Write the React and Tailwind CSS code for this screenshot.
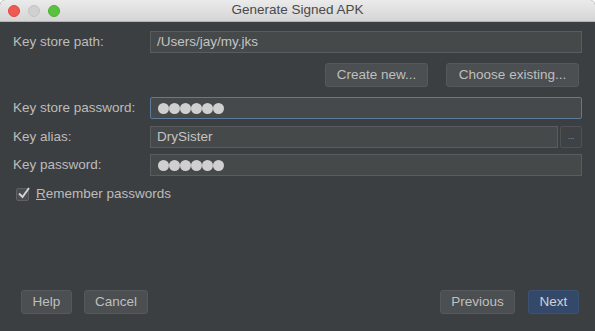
const Dots = () => (
  <div className="flex items-center pl-[7px]">
    {[0, 1, 2, 3, 4, 5].map((i) => (
      <span key={i} className="block w-[11px] h-[11px] rounded-full bg-[#cfcfcf]" />
    ))}
  </div>
);

const Field = ({ children, focused, className = "" }) => (
  <div
    className={`h-[22px] flex items-center border bg-[#45494a] ${
      focused ? "border-[#5b7a9c] rounded-[2px]" : "border-[#5a5d5f]"
    } ${className}`}
  >
    {children}
  </div>
);

const Button = ({ children, primary, className = "" }) => (
  <button
    className={`h-[24px] rounded-[3px] border text-[13.5px] ${
      primary
        ? "bg-[#34496a] border-[#3d5272] text-[#cdd2d8]"
        : "bg-[#4b4f51] border-[#55595b] text-[#bfbfbf]"
    } ${className}`}
  >
    {children}
  </button>
);

const Row = ({ label, children, className = "" }) => (
  <div className={`flex items-center ${className}`}>
    <div className="w-[137px] text-[13.5px] text-[#bcbcbc]">{label}</div>
    <div className="flex-1 flex">{children}</div>
  </div>
);

export default function App() {
  return (
    <div
      className="w-[595px] h-[331px] bg-[#3c3f41] flex flex-col overflow-hidden rounded-t-[5px]"
      style={{ fontFamily: '"Liberation Sans", Arial, sans-serif' }}
    >
      <div className="h-[22px] flex items-center relative bg-gradient-to-b from-[#ebebeb] to-[#d5d5d5] border-b border-[#b4b4b4]">
        <div className="flex gap-[8px] pl-[8px]">
          <span className="w-[12px] h-[12px] rounded-full bg-[#ee5a52] border border-[#dc4b43]" />
          <span className="w-[12px] h-[12px] rounded-full bg-[#d0d0d0] border border-[#c2c2c2]" />
          <span className="w-[12px] h-[12px] rounded-full bg-[#5ac23f] border border-[#4eae35]" />
        </div>
        <div className="absolute inset-0 flex items-center justify-center text-[13.5px] text-[#4a4a4a]">
          Generate Signed APK
        </div>
      </div>

      <div className="flex-1 flex flex-col pl-[13px] pr-[13px]">
        <Row label="Key store path:" className="mt-[9px]">
          <Field className="flex-1">
            <span className="pl-[6px] text-[13.5px] text-[#c4c4c4]">/Users/jay/my.jks</span>
          </Field>
        </Row>

        <div className="flex justify-end gap-[18px] mt-[10px] pr-[3px]">
          <Button className="w-[103px]">Create new...</Button>
          <Button className="w-[133px]">Choose existing...</Button>
        </div>

        <Row label="Key store password:" className="mt-[10px]">
          <Field focused className="flex-1">
            <Dots />
          </Field>
        </Row>

        <Row label="Key alias:" className="mt-[7px]">
          <Field className="flex-1">
            <span className="pl-[6px] text-[13.5px] text-[#c4c4c4]">DrySister</span>
          </Field>
          <div className="ml-[2px] w-[22px] h-[22px] border border-[#505355] rounded-[2px] bg-[#3e4244] flex items-center justify-center text-[8px] text-[#a8a8a8] leading-none">
            ...
          </div>
        </Row>

        <Row label="Key password:" className="mt-[6px]">
          <Field className="flex-1">
            <Dots />
          </Field>
        </Row>

        <div className="flex items-center mt-[8px] pl-[3px]">
          <div className="relative w-[13px] h-[13px] border border-[#5e6163] bg-[#4a4d4f] rounded-[2px]">
            <svg
              className="absolute left-[0px] top-[-3px]"
              width="14"
              height="14"
              viewBox="0 0 14 14"
              fill="none"
            >
              <path d="M2 7.5 L5.5 11 L12 2" stroke="#d2d2d2" strokeWidth="2" />
            </svg>
          </div>
          <span className="ml-[7px] text-[13.5px] text-[#bcbcbc]">
            <span className="underline">R</span>emember passwords
          </span>
        </div>

        <div className="mt-auto mb-[17px] flex items-center">
          <Button className="ml-[8px] w-[51px]">Help</Button>
          <Button className="ml-[12px] w-[64px]">Cancel</Button>
          <div className="flex-1" />
          <Button className="w-[75px]">Previous</Button>
          <Button primary className="ml-[13px] mr-[3px] w-[51px]">Next</Button>
        </div>
      </div>
    </div>
  );
}
